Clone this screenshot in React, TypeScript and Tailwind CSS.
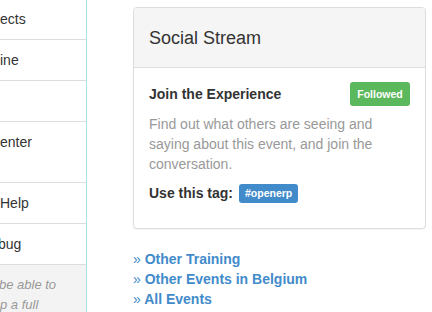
const navItems: { text: string; lines?: number; shift?: string }[] = [
  { text: "ects" },
  { text: "ine" },
  { text: "" },
  { text: "enter", lines: 2 },
  { text: "Help" },
  { text: "bug", shift: "-ml-[2px]" },
];

const links = ["Other Training", "Other Events in Belgium", "All Events"];

export default function App() {
  return (
    <div className="flex h-[312px] w-[432px] overflow-hidden bg-white font-['Liberation_Sans',Arial,sans-serif] text-[14px] leading-[20px] text-[#333]">
      {/* sidebar, cut off on the left */}
      <aside className="flex w-[87px] shrink-0 flex-col border-r border-[#a6e1ec]">
        <ul className="-mt-px">
          {navItems.map((item, i) => (
            <li
              key={i}
              className={`overflow-hidden whitespace-nowrap border-b border-[#ddd] py-[10px] ${
                item.lines === 2 ? "h-[61px]" : "h-[41px]"
              }`}
            >
              <span className={`block ${item.shift ?? ""}`}>{item.text}</span>
            </li>
          ))}
        </ul>
        <div className="flex-1 overflow-hidden bg-[#f3f3f3] pt-[10px] text-[13px] italic text-[#999] whitespace-nowrap">
          <p className="-ml-px">be able to</p>
          <p>p a full</p>
        </div>
      </aside>

      <main className="ml-[46px] w-[293px] shrink-0 pt-[7px]">
        <div className="rounded-[4px] border border-[#ddd] bg-white shadow-[0_1px_1px_rgba(0,0,0,0.05)]">
          <div className="rounded-t-[3px] border-b border-[#ddd] bg-[#f5f5f5] px-[15px] pb-[19px] pt-[20px]">
            <h3 className="text-[18px] leading-[20px] text-[#333]">Social Stream</h3>
          </div>
          <div className="px-[15px] pb-[25px] pt-[14px]">
            <div className="flex h-[24px] items-center justify-between">
              <h4 className="font-bold">Join the Experience</h4>
              <span className="flex h-[24px] w-[60px] items-center justify-center rounded-[3px] bg-[#5cb85c] text-[10.5px] font-bold text-white">
                Followed
              </span>
            </div>
            <p className="mt-[8px] text-[#999]">
              Find out what others are seeing and saying about this event, and join the
              conversation.
            </p>
            <div className="mt-[9px] flex items-center">
              <strong className="font-bold">Use this tag:</strong>
              <span className="ml-[6px] flex h-[19px] items-center rounded-[3px] bg-[#428bca] px-[6px] text-[10.5px] font-bold text-white">
                #openerp
              </span>
            </div>
          </div>
        </div>

        <ul className="mt-[20px]">
          {links.map((l) => (
            <li key={l} className="whitespace-nowrap font-bold text-[#428bca]">
              <span className="font-normal">»</span> {l}
            </li>
          ))}
        </ul>
      </main>
    </div>
  );
}
